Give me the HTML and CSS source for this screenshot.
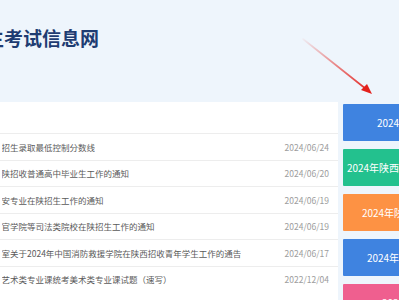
FILE: index.html
```html
<!DOCTYPE html>
<html lang="zh-CN">
<head>
<meta charset="utf-8">
<title>考试信息网</title>
<link rel="stylesheet" href="styles.css">
</head>
<body>
<div class="page">
  <header class="header">
    <h1 class="site-title">生考试信息网</h1>
    <svg class="arrow" width="399" height="102" viewBox="0 0 399 102" xmlns="http://www.w3.org/2000/svg">
      <defs>
        <linearGradient id="ag" x1="303" y1="39" x2="370" y2="92" gradientUnits="userSpaceOnUse">
          <stop offset="0" stop-color="#e53935" stop-opacity="0.05"/>
          <stop offset="0.5" stop-color="#e53935" stop-opacity="0.6"/>
          <stop offset="1" stop-color="#e3211c" stop-opacity="1"/>
        </linearGradient>
      </defs>
      <line x1="303" y1="39" x2="366" y2="89" stroke="url(#ag)" stroke-width="1.6" stroke-linecap="round"/>
      <polygon points="372,94 361,90 367,84" fill="#e3211c"/>
    </svg>
  </header>
  <main class="main">
    <section class="list">
      <ul class="rows">
        <li class="row"><span class="title">招生录取最低控制分数线</span><span class="date">2024/06/24</span></li>
        <li class="row"><span class="title">陕招收普通高中毕业生工作的通知</span><span class="date">2024/06/20</span></li>
        <li class="row"><span class="title">安专业在陕招生工作的通知</span><span class="date">2024/06/19</span></li>
        <li class="row"><span class="title">官学院等司法类院校在陕招生工作的通知</span><span class="date">2024/06/19</span></li>
        <li class="row"><span class="title">室关于2024年中国消防救援学院在陕西招收青年学生工作的通告</span><span class="date">2024/06/17</span></li>
        <li class="row"><span class="title">艺术类专业课统考美术类专业课试题（速写）</span><span class="date">2022/12/04</span></li>
      </ul>
    </section>
    <aside class="side">
      <a class="tile tile-blue">2024年陕西省高考分数线</a>
      <a class="tile tile-green">2024年陕西普通高校招生录取结果查询</a>
      <a class="tile tile-orange">2024年陕西省高职分类考试招生</a>
      <a class="tile tile-blue">2024年成人高考网上报名入口</a>
      <a class="tile tile-pink">2024年研究生招生考试</a>
    </aside>
  </main>
</div>
</body>
</html>
```
FILE: styles.css
```css
* { box-sizing: border-box; }
html, body {
  margin: 0;
  padding: 0;
  width: 399px;
  height: 300px;
  overflow: hidden;
  background: #eef5fc;
  font-family: "Noto Sans CJK SC", "Noto Sans", sans-serif;
}
.page {
  display: flex;
  flex-direction: column;
  width: 399px;
}
.header {
  position: relative;
  height: 102px;
  padding-top: 26px;
}
.site-title {
  margin: 0 0 0 -15px;
  font-size: 19px;
  line-height: 24px;
  font-weight: 700;
  color: #1e3c72;
  letter-spacing: 0;
  white-space: nowrap;
}
.arrow {
  position: absolute;
  left: 0;
  top: 0;
}
.main {
  display: flex;
  align-items: flex-start;
}
.list {
  width: 338px;
  flex: none;
  background: #fff;
  padding-top: 31px;
  height: 198px;
}
.rows {
  list-style: none;
  margin: 0;
  padding: 0;
}
.row {
  display: flex;
  justify-content: space-between;
  align-items: center;
  height: 26.5px;
  border-top: 1px solid #ededed;
  padding: 0 9px 0 1.5px;
  font-size: 8.5px;
}
.title {
  color: #5a5a5a;
  white-space: nowrap;
  overflow: hidden;
}
.date {
  color: #9c9c9c;
  flex: none;
  margin-left: 8px;
}
.side {
  flex: none;
  width: 180px;
  margin-left: 5px;
  padding-top: 2px;
  display: flex;
  flex-direction: column;
  gap: 8px;
}
.tile {
  display: flex;
  align-items: center;
  justify-content: center;
  height: 37px;
  color: #fff;
  font-size: 10px;
  white-space: nowrap;
  border-radius: 1px;
}
.tile-blue { background: #3f83e0; }
.tile-green { background: #23c18e; }
.tile-orange { background: #fd9244; }
.tile-pink { background: #ef5f8f; }
```
